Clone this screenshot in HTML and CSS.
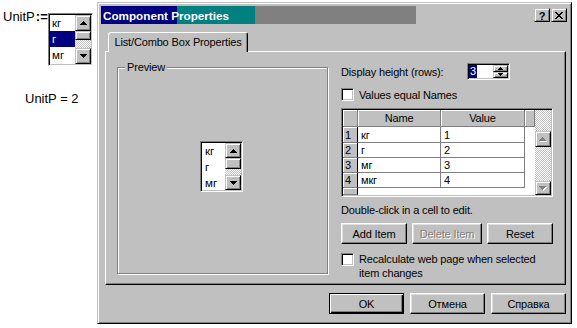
FILE: index.html
```html
<!DOCTYPE html>
<html>
<head>
<meta charset="utf-8">
<link rel="stylesheet" href="styles.css">
</head>
<body>
<div class="sheet">
  <div class="def">
    <span class="lbl">UnitP<span class="assign">:=</span></span>
    <div class="lb lb-sheet">
      <div class="items">
        <div class="item">кг</div>
        <div class="item sel">г</div>
        <div class="item">мг</div>
      </div>
      <div class="vsb">
        <div class="sbtn"><svg width="7" height="4" viewBox="0 0 7 4"><path d="M3 0h1v1h1v1h1v1h1v1H0V3h1V2h1V1h1z"/></svg></div>
        <div class="thumb"></div>
        <div class="track"></div>
        <div class="sbtn"><svg width="7" height="4" viewBox="0 0 7 4"><path d="M0 0h7v1H6v1H5v1H4v1H3V3H2V2H1V1H0z"/></svg></div>
      </div>
    </div>
  </div>
  <div class="result">UnitP = 2</div>
</div>

<div class="dialog">
  <div class="titlebar">
    <span class="title">Component Properties</span>
    <div class="capbtns">
      <div class="capbtn help">?</div>
      <div class="capbtn"><svg width="8" height="7" viewBox="0 0 8 7"><path d="M0 0h2v1H0zM6 0h2v1H6zM1 1h2v1H1zM5 1h2v1H5zM2 2h4v1H2zM3 3h2v1H3zM2 4h4v1H2zM1 5h2v1H1zM5 5h2v1H5zM0 6h2v1H0zM6 6h2v1H6z"/></svg></div>
    </div>
  </div>

  <div class="tabs"><div class="tab">List/Combo Box Properties</div></div>

  <div class="panel">
    <div class="group">
      <span class="legend">Preview</span>
      <div class="lb lb-preview">
        <div class="items">
          <div class="item">кг</div>
          <div class="item">г</div>
          <div class="item">мг</div>
        </div>
        <div class="vsb">
          <div class="sbtn"><svg width="7" height="4" viewBox="0 0 7 4"><path d="M3 0h1v1h1v1h1v1h1v1H0V3h1V2h1V1h1z"/></svg></div>
          <div class="thumb"></div>
          <div class="track"></div>
          <div class="sbtn"><svg width="7" height="4" viewBox="0 0 7 4"><path d="M0 0h7v1H6v1H5v1H4v1H3V3H2V2H1V1H0z"/></svg></div>
        </div>
      </div>
    </div>

    <div class="side">
      <div class="row1">
        <span class="lbl-h">Display height (rows):</span>
        <div class="spin">
          <div class="field"><span class="seltext">3</span></div>
          <div class="spinbtns">
            <div class="spb"><svg width="5" height="3" viewBox="0 0 5 3"><path d="M2 0h1v1h1v1h1v1H0V2h1V1h1z"/></svg></div>
            <div class="spb"><svg width="5" height="3" viewBox="0 0 5 3"><path d="M0 0h5v1H4v1H3v1H2V2H1V1H0z"/></svg></div>
          </div>
        </div>
      </div>

      <div class="check"><span class="box"></span><span>Values equal Names</span></div>

      <div class="grid">
        <div class="table">
          <div class="hd corner"></div><div class="hd">Name</div><div class="hd">Value</div><div class="hd"></div>
          <div class="rn">1</div><div class="cell">кг</div><div class="cell">1</div><div class="blank"></div>
          <div class="rn">2</div><div class="cell">г</div><div class="cell">2</div><div class="blank"></div>
          <div class="rn">3</div><div class="cell">мг</div><div class="cell">3</div><div class="blank"></div>
          <div class="rn">4</div><div class="cell">мкг</div><div class="cell">4</div><div class="blank"></div>
          <div class="rn"></div><div class="blank"></div><div class="blank"></div><div class="blank"></div>
        </div>
        <div class="vsb gvsb">
          <div class="track top"></div>
          <div class="sbtn"><svg width="8" height="5" viewBox="0 0 8 5"><path fill="#fff" d="M4 1h1v1h1v1h1v1h1v1H1V4h1V3h1V2h1z"/><path fill="#808080" d="M3 0h1v1h1v1h1v1h1v1H0V3h1V2h1V1h1z"/></svg></div>
          <div class="track"></div>
          <div class="sbtn dn"><svg width="8" height="5" viewBox="0 0 8 5"><path fill="#fff" d="M1 1h7v1H7v1H6v1H5v1H4V4H3V3H2V2H1z"/><path fill="#808080" d="M0 0h7v1H6v1H5v1H4v1H3V3H2V2H1V1H0z"/></svg></div>
        </div>
      </div>

      <div class="hint">Double-click in a cell to edit.</div>

      <div class="btnrow">
        <div class="btn">Add Item</div>
        <div class="btn disabled">Delete Item</div>
        <div class="btn">Reset</div>
      </div>

      <div class="check check2"><span class="box"></span><span class="ctext">Recalculate web page when selected<br>item changes</span></div>
    </div>
  </div>

  <div class="footer">
    <div class="btn default">OK</div>
    <div class="btn">Отмена</div>
    <div class="btn">Справка</div>
  </div>
</div>
</body>
</html>
```

FILE: styles.css
```css
* { box-sizing: border-box; margin: 0; padding: 0; }
html, body { width: 577px; height: 328px; overflow: hidden; background: #fff; }
body {
  display: flex;
  align-items: flex-start;
  font-family: "Liberation Sans", Arial, sans-serif;
  font-size: 11px;
  color: #000;
  letter-spacing: -0.15px;
}

/* ---------- worksheet ---------- */
.sheet { width: 97px; flex: none; display: flex; flex-direction: column; }
.def { display: flex; align-items: flex-start; margin: 7px 0 0 3px; }
.def .lbl { width: 45px; font-size: 13px; line-height: 13px; letter-spacing: 0; margin-top: 3px; }
.assign { font-weight: bold; margin-left: 1px; }
.result { margin: 26px 0 0 25px; font-size: 13px; line-height: 14px; letter-spacing: 0; }

/* list box */
.lb {
  display: flex;
  background: #fff;
  border: 1px solid;
  border-color: #808080 #fff #fff #808080;
  box-shadow: inset 1px 1px #000, inset -1px -1px #c0c0c0;
  padding: 1px;
}
.lb-sheet { width: 45px; height: 53px; margin-top: 6px; }
.items { flex: 1; display: flex; flex-direction: column; }
.item { height: 16px; line-height: 16px; padding-left: 2px; font-size: 11.5px; letter-spacing: 0; }
.item.sel { background: #000080; color: #fff; }
.lb-preview .item { padding-left: 3px; }

.vsb { width: 16px; flex: none; display: flex; flex-direction: column; }
.sbtn, .thumb, .spb, .capbtn {
  background: #c0c0c0;
  border: 1px solid;
  border-color: #c0c0c0 #000 #000 #c0c0c0;
  box-shadow: inset 1px 1px #fff, inset -1px -1px #808080;
}
.sbtn { height: 16px; flex: none; display: flex; align-items: center; justify-content: center; }
.sbtn svg { display: block; }
.thumb { height: 9px; flex: none; }
.track { flex: 1; background: repeating-conic-gradient(#c0c0c0 0 25%, #fff 0 50%) 0 0 / 2px 2px; }
.lb-preview .sbtn { height: 15px; }
.lb-preview .thumb { height: 11px; }

/* ---------- dialog ---------- */
.dialog {
  flex: none;
  width: 475px;
  height: 322px;
  margin-top: 2px;
  background: #c0c0c0;
  border: 1px solid;
  border-color: #c0c0c0 #000 #000 #c0c0c0;
  box-shadow: inset 1px 1px #fff, inset -1px -1px #808080;
  padding: 3px;
  display: flex;
  flex-direction: column;
}
.titlebar {
  height: 18px;
  flex: none;
  display: flex;
  align-items: center;
  padding: 0 1px 0 2px;
  background: linear-gradient(to right, #000080 0 76px, #008080 76px 154px, #808080 154px 315px, #c0c0c0 315px);
}
.title { color: #fff; font-weight: bold; font-size: 11.7px; letter-spacing: 0; }
.capbtns { margin-left: auto; display: flex; gap: 1px; }
.capbtn { width: 16px; height: 14px; display: flex; align-items: center; justify-content: center; }
.capbtn.help { font-weight: bold; font-size: 11px; line-height: 12px; letter-spacing: 0; padding-top: 1px; }
.capbtn svg { display: block; }

.tabs { display: flex; margin-top: 8px; padding-left: 7px; height: 19px; flex: none; position: relative; z-index: 1; }
.tab {
  width: 140px;
  height: 20px;
  background: #c0c0c0;
  border: 1px solid;
  border-bottom: none;
  border-color: #fff #000 transparent #fff;
  border-radius: 3px 3px 0 0;
  box-shadow: inset -1px 0 #808080;
  display: flex;
  align-items: center;
  justify-content: center;
  padding-bottom: 1px;
}

.panel {
  flex: none;
  margin-left: 4px;
  width: 461px;
  height: 234px;
  border: 1px solid;
  border-color: #fff #000 #000 #fff;
  box-shadow: inset -1px -1px #808080;
  display: flex;
  align-items: flex-start;
}

.group {
  position: relative;
  flex: none;
  margin: 15px 0 0 11px;
  width: 211px;
  height: 207px;
  border: 1px solid #808080;
  box-shadow: inset 1px 1px #fff, 1px 1px #fff;
}
.legend { position: absolute; top: -7px; left: 7px; padding: 0 2px; background: #c0c0c0; line-height: 13px; }
.lb-preview { width: 43px; height: 51px; margin: 73px 0 0 82px; }

.side { flex: none; margin: 11px 0 0 13px; width: 212px; display: flex; flex-direction: column; }
.row1 { display: flex; align-items: center; height: 17px; }
.lbl-h { width: 126px; }
.spin {
  width: 43px;
  height: 17px;
  display: flex;
  background: #fff;
  border: 1px solid;
  border-color: #808080 #fff #fff #808080;
  box-shadow: inset 1px 1px #000, inset -1px -1px #c0c0c0;
  padding: 1px;
}
.field { flex: 1; display: flex; align-items: center; }
.seltext { background: #000080; color: #fff; height: 13px; line-height: 13px; padding: 0 1px; }
.spinbtns { width: 15px; display: flex; flex-direction: column; }
.spb { flex: 1; display: flex; align-items: center; justify-content: center; }
.spb svg { display: block; }

.check { display: flex; align-items: center; margin-top: 8px; height: 13px; }
.box {
  width: 13px; height: 13px; flex: none; margin-right: 5px;
  background: #fff;
  border: 1px solid;
  border-color: #808080 #fff #fff #808080;
  box-shadow: inset 1px 1px #000, inset -1px -1px #c0c0c0;
}

.grid {
  margin-top: 7px;
  height: 89px;
  display: flex;
  background: #fff;
  border: 1px solid;
  border-color: #808080 #fff #fff #808080;
  box-shadow: inset 1px 1px #000, inset -1px -1px #c0c0c0;
  padding: 1px;
}
.table {
  flex: 1;
  display: grid;
  grid-template-columns: 15px 83px 84px 10px;
  grid-template-rows: 17px 16px 15px 15px 15px 7px;
}
.hd, .rn {
  background: #c0c0c0;
  border-right: 1px solid #808080;
  border-bottom: 1px solid #808080;
  box-shadow: inset 1px 1px #fff;
  display: flex;
  align-items: center;
}
.hd { justify-content: center; }
.rn { padding-left: 2px; border-right-color: #000; }
.cell {
  border-right: 1px solid #808080;
  border-bottom: 1px solid #808080;
  padding-left: 3px;
  display: flex;
  align-items: center;
}
.gvsb .track.top { flex: none; height: 21px; }
.gvsb .sbtn.dn { height: 14px; }

.hint { margin-top: 7px; line-height: 13px; }

.btnrow { margin-top: 6px; display: flex; justify-content: space-between; }
.btn {
  height: 21px;
  display: flex;
  align-items: center;
  justify-content: center;
  background: #c0c0c0;
  border: 1px solid;
  border-color: #fff #000 #000 #fff;
  box-shadow: inset -1px -1px #808080, inset 1px 1px #dfdfdf;
}
.btnrow .btn { width: 66px; }
.btnrow .btn.disabled { width: 70px; color: #808080; text-shadow: 1px 1px #fff; }

.check2 { align-items: flex-start; margin-top: 9px; height: auto; }
.ctext { line-height: 14px; margin-top: -1px; }

.footer { flex: none; margin-top: 8px; display: flex; justify-content: flex-end; gap: 6px; padding-right: 2px; }
.footer .btn { width: 75px; }
.btn.default {
  border-color: #000;
  box-shadow: inset 1px 1px #fff, inset -1px -1px #000, inset -2px -2px #808080;
}
```
